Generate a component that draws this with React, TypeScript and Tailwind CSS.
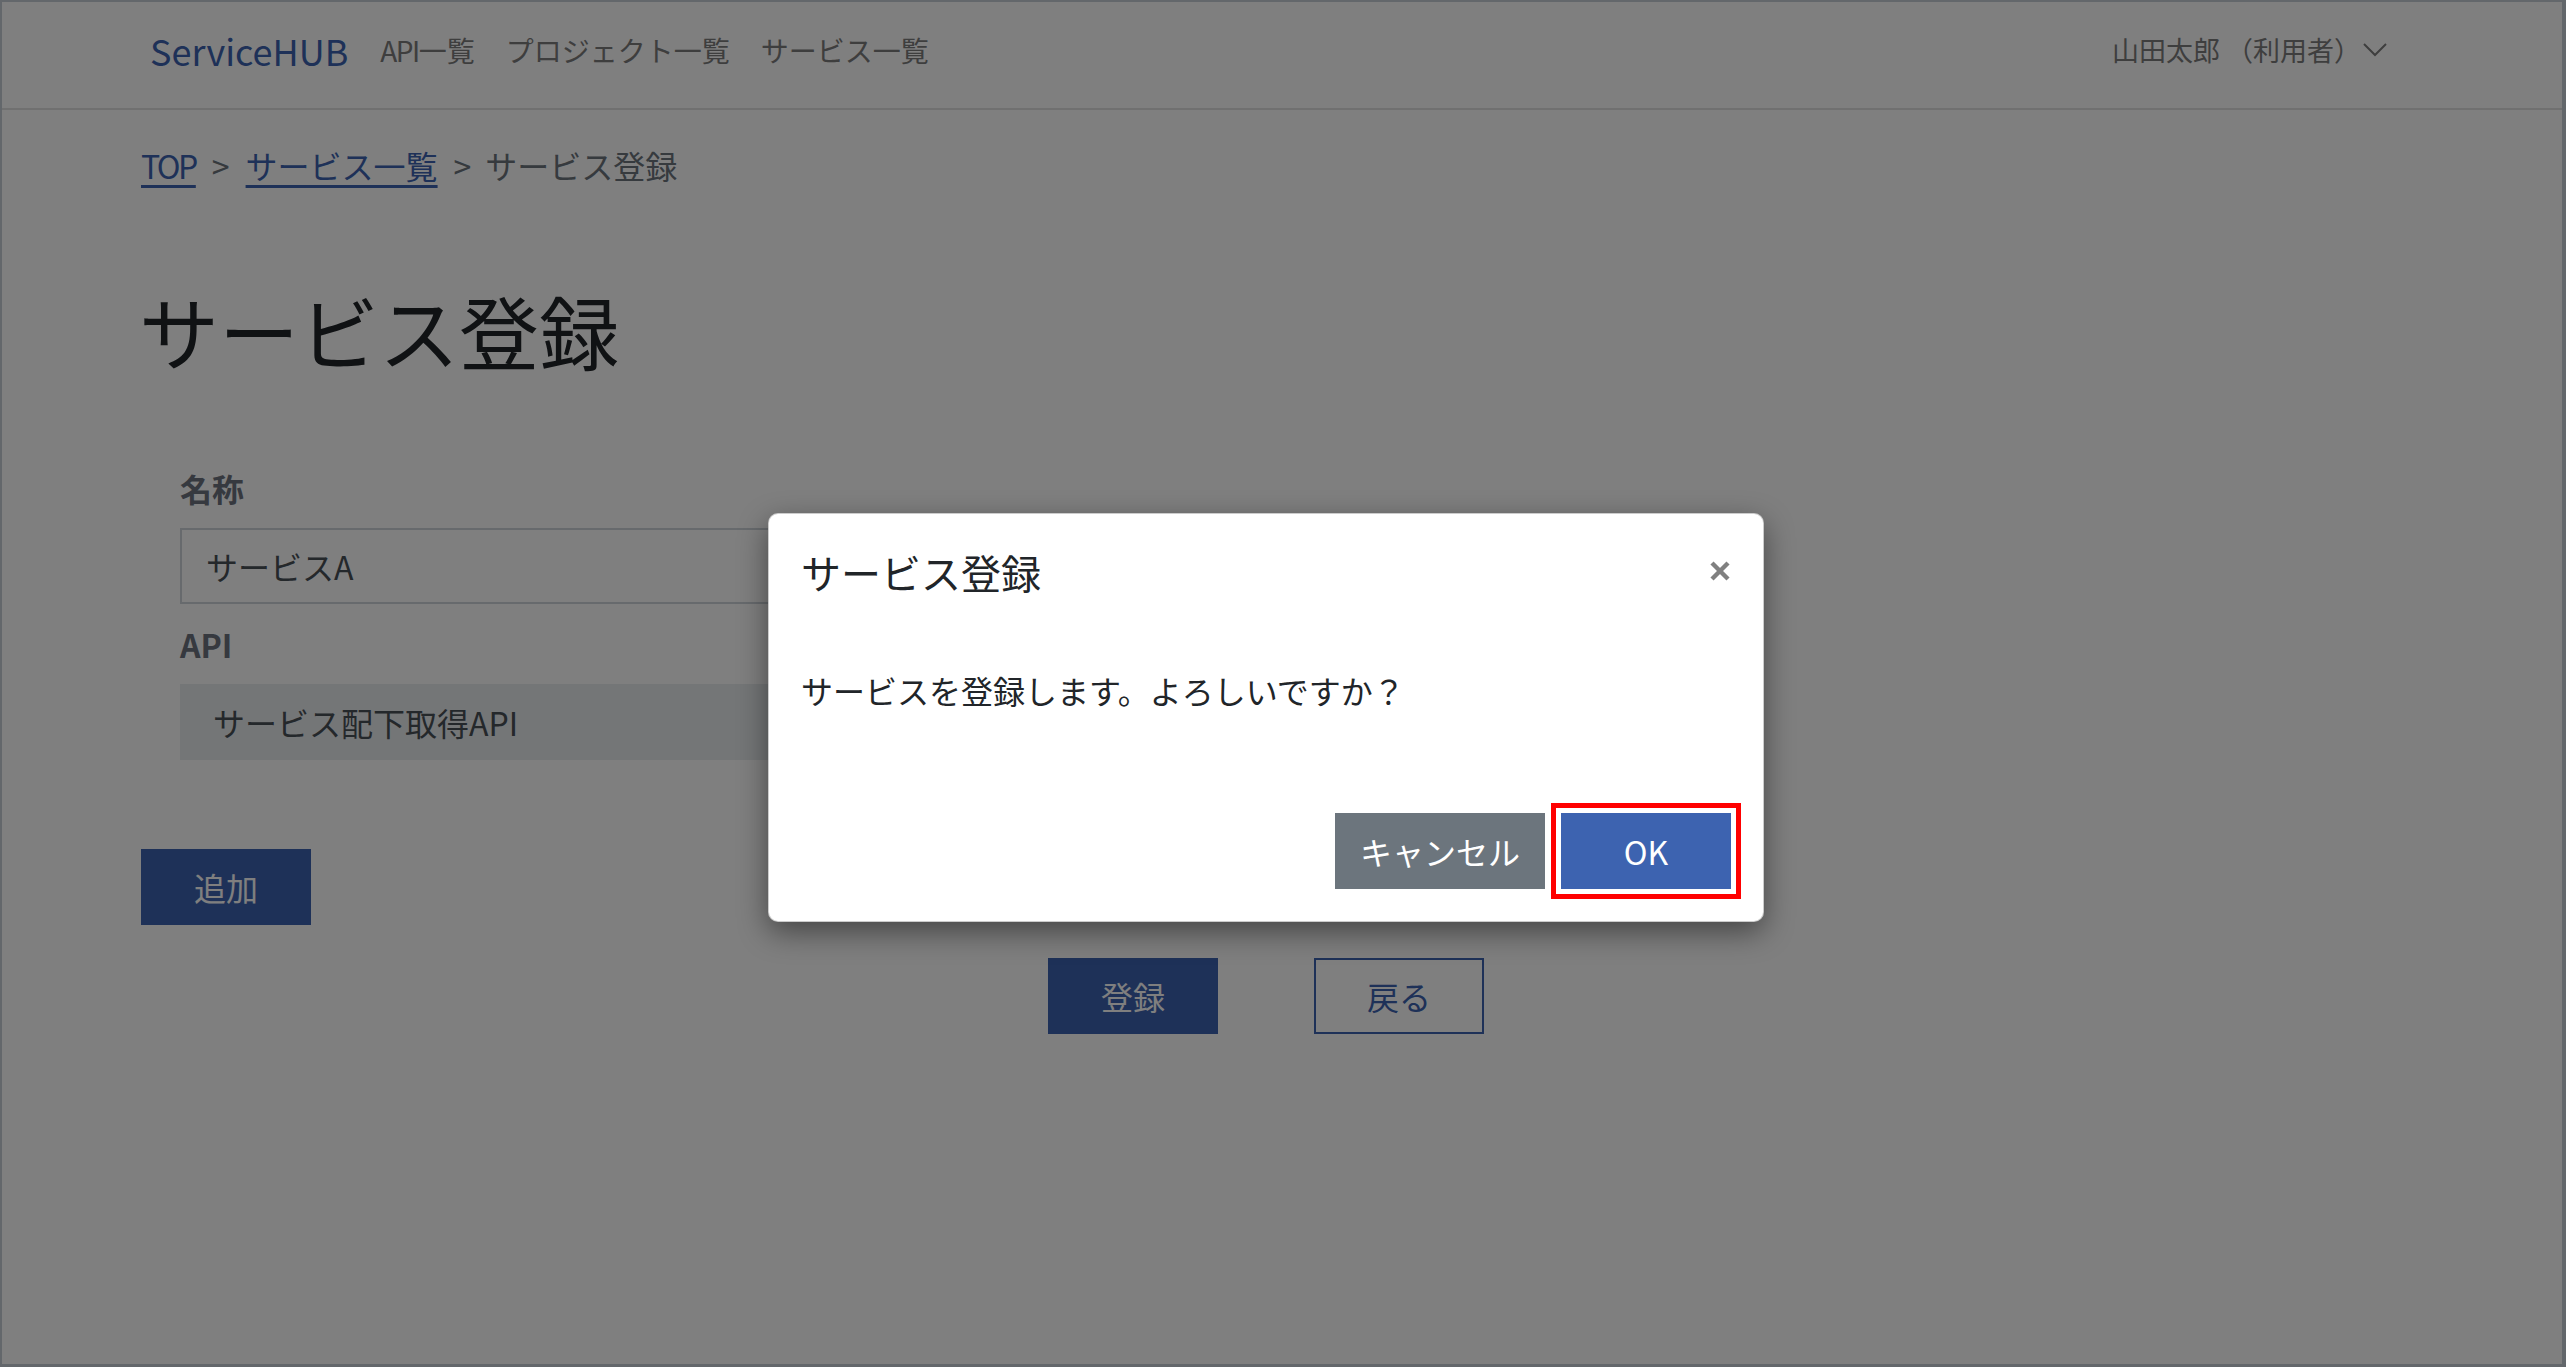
import React from "react";

function Chevron() {
  return (
    <svg width="24" height="14" viewBox="0 0 24 14" fill="none" stroke="currentColor" strokeWidth="2">
      <polyline points="1,1 12,12 23,1" />
    </svg>
  );
}

function CloseIcon() {
  return (
    <svg width="20" height="20" viewBox="0 0 20 20" stroke="#808080" strokeWidth="4.5" strokeLinecap="butt">
      <line x1="2" y1="2" x2="18" y2="18" />
      <line x1="18" y1="2" x2="2" y2="18" />
    </svg>
  );
}

export default function App() {
  return (
    <div className="relative h-[1367px] w-full overflow-hidden bg-white font-['Noto_Sans_CJK_JP',sans-serif] [text-spacing-trim:space-all]">
      <div className="h-full border-t-2 border-l-2 border-r-4 border-b-[3px] border-[#c6ced6]">
        <header className="flex h-[108px] items-center border-b-2 border-[#e0e0e0] pb-[10px] pl-[148px] pr-[175px]">
          <div className="text-[36px] leading-[54px] text-[#3d63b0]">ServiceHUB</div>
          <nav className="ml-[32px] flex gap-[31px] text-[28px] leading-[42px] text-[#7c7c7c]">
            <span>
              <span className="tracking-[-1.5px]">API</span>一覧
            </span>
            <span>プロジェクト一覧</span>
            <span>サービス一覧</span>
          </nav>
          <div className="ml-auto flex items-center gap-[2px] text-[27px] leading-[40px] text-[#7c7c7c]">
            <span>
              山田太郎<span className="ml-[6px]">（</span>利用者）
            </span>
            <Chevron />
          </div>
        </header>

        <main className="ml-[139px] w-[2250px]">
          <nav className="mt-[31px] flex text-[32px] leading-[48px]">
            <a className="tracking-[-2.5px] text-[#3d63b0] underline underline-offset-[6px]">TOP</a>
            <span className="mx-[16px] text-[#6c757d]">&gt;</span>
            <a className="text-[#3d63b0] underline underline-offset-[6px]">サービス一覧</a>
            <span className="ml-[16px] mr-[14px] text-[#6c757d]">&gt;</span>
            <span className="text-[#6c757d]">サービス登録</span>
          </nav>

          <h1 className="-ml-[2px] mt-[92px] text-[80px] font-normal leading-[96px] text-[#212529]">サービス登録</h1>

          <div className="ml-[39px] mt-[87px] w-[1000px]">
            <label className="block text-[32px] font-bold leading-[48px] text-[#6c737e]">名称</label>
            <div className="mt-[16px] flex h-[76px] items-center border-2 border-[#ced4da] px-[24px] text-[32px] text-[#495057]">
              サービスA
            </div>
            <label className="mt-[16px] block text-[32px] font-bold leading-[48px] text-[#6c737e]">API</label>
            <div className="mt-[16px] flex h-[76px] items-center bg-[#e9ecef] px-[33px] text-[32px] text-[#495057]">
              サービス配下取得API
            </div>
          </div>

          <button className="mt-[89px] h-[76px] w-[170px] bg-[#3d63b0] text-[32px] text-white">追加</button>

          <div className="mt-[33px] flex justify-center gap-[96px]">
            <button className="h-[76px] w-[170px] bg-[#3d63b0] text-[32px] text-white">登録</button>
            <button className="h-[76px] w-[170px] border-2 border-[#3d63b0] text-[32px] text-[#3d63b0]">戻る</button>
          </div>
        </main>
      </div>

      <div className="absolute inset-0 bg-black/50" />

      <div className="absolute inset-0 flex justify-center pr-[34px] pt-[513px]">
        <div className="flex h-[409px] w-[996px] flex-col rounded-[10px] border border-black/20 bg-white shadow-[0_10px_30px_rgba(0,0,0,0.45)]">
          <div className="flex items-start justify-between px-[32px] pt-[28px]">
            <h5 className="text-[40px] font-normal leading-[60px] text-[#212529]">サービス登録</h5>
            <div className="mr-[1px] mt-[19px]">
              <CloseIcon />
            </div>
          </div>
          <div className="px-[32px] pt-[64px] text-[32px] leading-[48px] text-[#212529]">
            サービスを登録します。よろしいですか？
          </div>
          <div className="mt-auto flex justify-end gap-[16px] px-[32px] pb-[32px]">
            <button className="h-[76px] min-w-[170px] bg-[#6c757d] px-[25px] text-[32px] text-white">キャンセル</button>
            <div className="relative">
              <button className="h-[76px] w-[170px] bg-[#3d63b0] text-[32px] text-white">OK</button>
              <div className="pointer-events-none absolute -inset-[10px] border-[5px] border-[#ff0000]" />
            </div>
          </div>
        </div>
      </div>
    </div>
  );
}
